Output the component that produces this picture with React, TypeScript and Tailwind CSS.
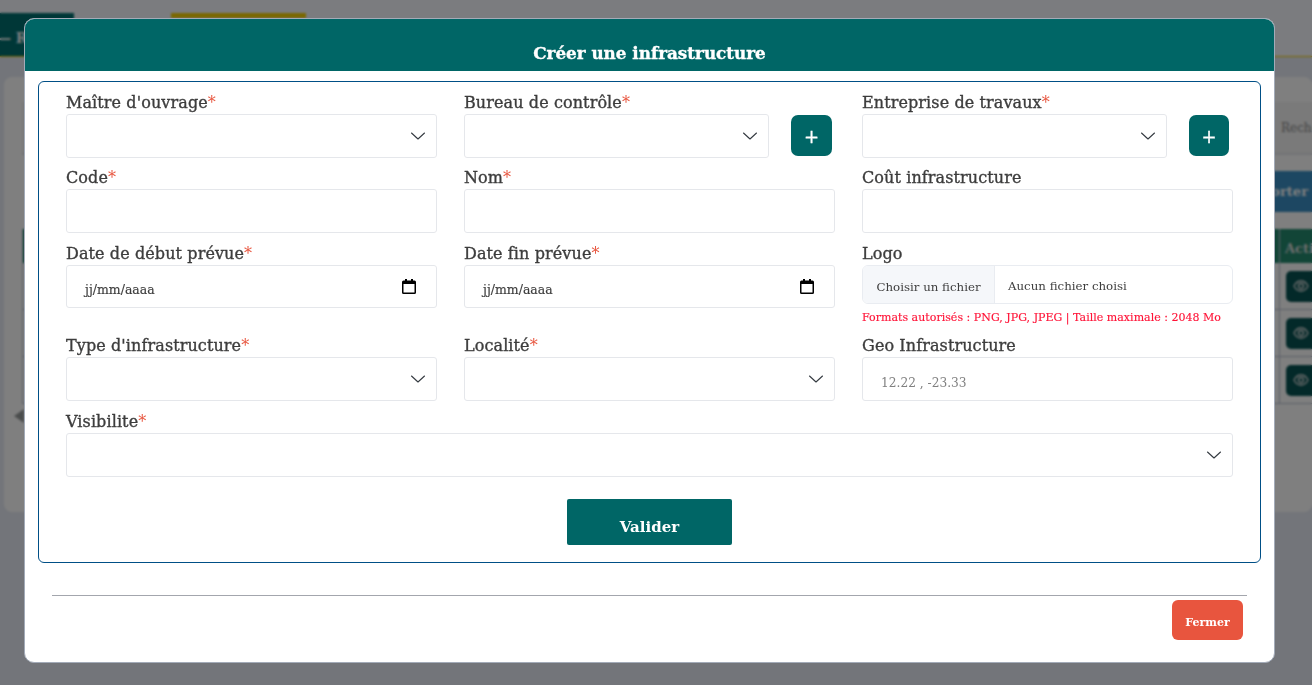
const serif = 'font-["DejaVu_Serif",serif]';

function Chevron() {
  return (
    <svg viewBox="0 0 16 16" className="h-4 w-4" fill="none" stroke="#343a40" strokeWidth="1.100" strokeLinecap="round" strokeLinejoin="round">
      <path d="M1.500 5 8 11l6.500-6" />
    </svg>
  );
}

function CalendarIcon() {
  return (
    <svg viewBox="0 0 14 15" className="h-[15px] w-[14px]">
      <path d="M3 0h2v1.500h4V0h2v1.500h1.500A1.500 1.500 0 0 1 14 3v10.500a1.500 1.500 0 0 1-1.500 1.500h-11A1.500 1.500 0 0 1 0 13.500V3a1.500 1.500 0 0 1 1.500-1.500H3zM1.500 5v8.500h11V5z" fill="#000" />
    </svg>
  );
}

function Label({ text, required }: { text: string; required?: boolean }) {
  return (
    <div className="h-[22px] text-[16px] leading-[22px] tracking-[0.1px] text-[#3d3d3d] whitespace-nowrap [-webkit-text-stroke:0.35px_#3d3d3d]">
      {text}
      {required && <span className="text-[#e8553e] [-webkit-text-stroke:0]">*</span>}
    </div>
  );
}

function Select({ className = '' }: { className?: string }) {
  return (
    <div className={`flex h-11 items-center justify-end rounded-[3px] border border-[#e5e7eb] bg-white pr-[10px] ${className}`}>
      <Chevron />
    </div>
  );
}

function Input() {
  return <div className="h-11 rounded-[3px] border border-[#e5e7eb] bg-white" />;
}

function DateInput() {
  return (
    <div className="flex h-[43px] items-center justify-between rounded-[3px] border border-[#e5e7eb] bg-white pl-[18px] pr-[20px]">
      <span className="mt-2 text-[12.5px] text-[#3d3d3d] [-webkit-text-stroke:0.15px_#3d3d3d]">jj/mm/aaaa</span>
      <CalendarIcon />
    </div>
  );
}

function AddButton({ w }: { w: string }) {
  return (
    <button className={`mt-px flex h-[41px] ${w} shrink-0 items-center justify-center rounded-[7px] bg-[#006666] pt-[3px] text-[18px] leading-none text-white [-webkit-text-stroke:0.3px_#fff]`}>
      +
    </button>
  );
}

export default function App() {
  return (
    <div className={`relative h-[685px] w-[1312px] overflow-hidden bg-[#e6eaf4] ${serif}`}>
      {/* page behind the modal */}
      <div className="flex h-[57px] items-start border-b border-[#f5d000] bg-[#f6f8ff] pt-[13px]">
        <div className="flex h-[43px] w-[74px] items-center bg-[#006f6f] pt-[7px] text-[14px] font-bold whitespace-nowrap text-white">
          <span className="-ml-[3px]">— R</span>
        </div>
        <div className="ml-[97px] h-[43px] w-[135px] border-t-[5px] border-[#f5d000]" />
      </div>
      <div className="mt-5 ml-1 h-[435px] rounded-lg bg-white pt-[25px] pl-[18px]">
        <div className="flex h-[53px] items-center justify-end border-b-2 border-[#e5e7eb] bg-[#f4f4f4]">
          <span className="w-[31px] overflow-hidden text-[12px] text-[#888]">Recherche</span>
        </div>
        <div className="mt-4 flex h-[41px] justify-end">
          <div className="flex h-[41px] w-[95px] items-center justify-end bg-[#3a8fc4] pr-[4px] text-[13px] font-bold text-white">Exporter</div>
        </div>
        <div className="mt-[17px] w-[1290px] border-l border-[#b8c0d0]">
          <div className="flex h-[34px] justify-end bg-[#248a6f]">
            <div className="w-[33px] border-l border-[#b8c0d0] pt-[10px] pl-[5px] text-[13px] font-bold whitespace-nowrap text-[#ddd]">Acti</div>
          </div>
          {[0, 1, 2].map((row) => (
            <div key={row} className="flex h-[47px] justify-end border-b border-[#b8c0d0]">
              <div className="flex w-[33px] items-center border-l border-[#b8c0d0] pl-[6px]">
                <div className="flex h-[31px] w-[26px] items-center rounded-l-[5px] bg-[#065252] pl-[7px]">
                  <svg viewBox="0 0 16 16" className="h-4 w-4" fill="none" stroke="#ddd" strokeWidth="1.300">
                    <path d="M1 8s2.500-5 7-5 7 5 7 5-2.500 5-7 5-7-5-7-5z" />
                    <circle cx="8" cy="8" r="2.500" />
                  </svg>
                </div>
              </div>
            </div>
          ))}
        </div>
        <div className="mt-[5px] ml-[-8px] h-0 w-0 border-y-[7px] border-r-[10px] border-y-transparent border-r-[#959a9a]" />
      </div>

      {/* backdrop */}
      <div className="absolute inset-0 bg-black/50 backdrop-blur-[1px]" />

      {/* modal */}
      <div className="absolute top-[18px] left-[24px] flex h-[645px] w-[1251px] flex-col overflow-hidden rounded-[10px] border border-[#a3abb8] bg-white">
        <div className="h-[52px] shrink-0 bg-[#006666] pt-5 text-center text-[16.8px] font-bold leading-[28px] text-white [-webkit-text-stroke:0.35px_#fff]">
          Créer une infrastructure
        </div>
        <div className="mx-[13px] mt-[10px] h-[482px] shrink-0 rounded-[6px] border border-[#004f86] pt-[10px] pr-[27px] pl-[27px]">
          <div className="grid grid-cols-3 gap-x-[27px]">
            <div className="mb-[9px]">
              <Label text="Maître d'ouvrage" required />
              <Select />
            </div>
            <div className="mb-[9px]">
              <Label text="Bureau de contrôle" required />
              <div className="flex gap-[22px]">
                <Select className="w-[305px]" />
                <AddButton w="w-[41px]" />
              </div>
            </div>
            <div className="mb-[9px]">
              <Label text="Entreprise de travaux" required />
              <div className="flex gap-[22px]">
                <Select className="w-[305px]" />
                <AddButton w="w-[40px]" />
              </div>
            </div>

            <div className="mb-[10px]">
              <Label text="Code" required />
              <Input />
            </div>
            <div className="mb-[10px]">
              <Label text="Nom" required />
              <Input />
            </div>
            <div className="mb-[10px]">
              <Label text="Coût infrastructure" />
              <Input />
            </div>

            <div className="mb-[8px]">
              <Label text="Date de début prévue" required />
              <DateInput />
            </div>
            <div className="mb-[8px]">
              <Label text="Date fin prévue" required />
              <DateInput />
            </div>
            <div className="mb-[8px]">
              <Label text="Logo" />
              <div className="flex h-[39px] overflow-hidden rounded-[6px] border border-[#e9ecf1] pt-[4px] text-[11.8px] text-[#3d3d3d]">
                <div className="-mt-[4px] flex w-[132px] items-center justify-center border-r border-[#e9ecf1] bg-[#f5f7fa] pt-[6px]">Choisir un fichier</div>
                <div className="flex items-center pl-[13px]">Aucun fichier choisi</div>
              </div>
              <div className="mt-[4px] pt-px text-[11px] leading-[18px] tracking-[0.02px] whitespace-nowrap text-[#ff1438] [-webkit-text-stroke:0.15px_#ff1438]">
                Formats autorisés : PNG, JPG, JPEG | Taille maximale : 2048 Mo
              </div>
            </div>

            <div className="mb-[10px]">
              <Label text="Type d'infrastructure" required />
              <Select />
            </div>
            <div className="mb-[10px]">
              <Label text="Localité" required />
              <Select />
            </div>
            <div className="mb-[10px]">
              <Label text="Geo Infrastructure" />
              <div className="flex h-11 items-center rounded-[3px] border border-[#e5e7eb] pl-[18px] text-[12.2px] text-[#808080]">
                <span className="mt-[8px]">12.22 , -23.33</span>
              </div>
            </div>

            <div className="col-span-3">
              <Label text="Visibilite" required />
              <Select />
            </div>
          </div>
          <div className="mt-[22px] flex justify-center">
            <button className="h-[46px] w-[165px] rounded-[2px] bg-[#006666] pt-[10px] text-[15px] font-bold text-white">Valider</button>
          </div>
        </div>
        <div className="mx-[27px] mt-[32px] border-t border-[#a3a6ad]" />
        <div className="mt-1 flex justify-end pr-[31px]">
          <button className="h-10 w-[71px] rounded-[6px] bg-[#e8553e] pt-[7px] text-[11px] font-bold text-white">Fermer</button>
        </div>
      </div>
    </div>
  );
}
